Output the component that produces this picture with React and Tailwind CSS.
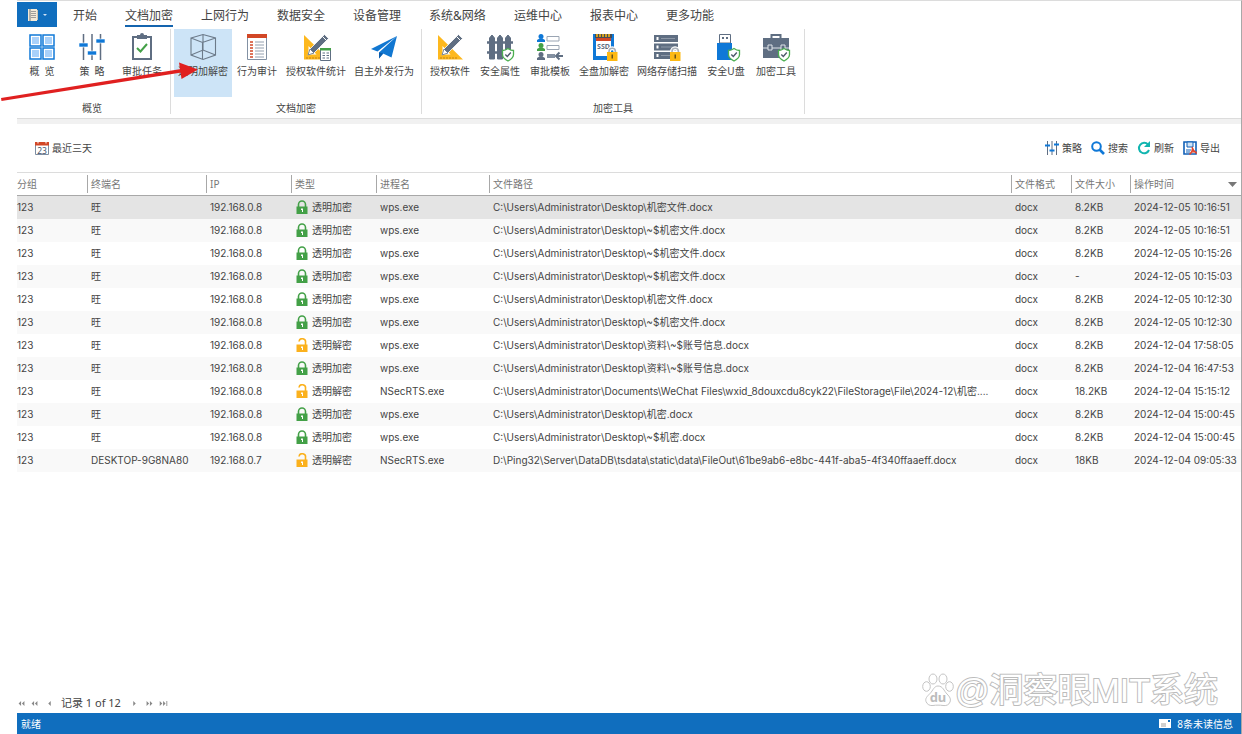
import React, { useState } from 'react';
import clsx from 'clsx';

const tabs = ['开始', '文档加密', '上网行为', '数据安全', '设备管理', '系统&网络', '运维中心', '报表中心', '更多功能'];

const desktop = 'C:\\Users\\Administrator\\Desktop\\';

const records = [
  ['旺', '192.168.0.8', true, 'wps.exe', desktop + '机密文件.docx', '8.2KB', '2024-12-05 10:16:51'],
  ['旺', '192.168.0.8', true, 'wps.exe', desktop + '~$机密文件.docx', '8.2KB', '2024-12-05 10:16:51'],
  ['旺', '192.168.0.8', true, 'wps.exe', desktop + '~$机密文件.docx', '8.2KB', '2024-12-05 10:15:26'],
  ['旺', '192.168.0.8', true, 'wps.exe', desktop + '~$机密文件.docx', '-', '2024-12-05 10:15:03'],
  ['旺', '192.168.0.8', true, 'wps.exe', desktop + '机密文件.docx', '8.2KB', '2024-12-05 10:12:30'],
  ['旺', '192.168.0.8', true, 'wps.exe', desktop + '~$机密文件.docx', '8.2KB', '2024-12-05 10:12:30'],
  ['旺', '192.168.0.8', false, 'wps.exe', desktop + '资料\\~$账号信息.docx', '8.2KB', '2024-12-04 17:58:05'],
  ['旺', '192.168.0.8', true, 'wps.exe', desktop + '资料\\~$账号信息.docx', '8.2KB', '2024-12-04 16:47:53'],
  ['旺', '192.168.0.8', false, 'NSecRTS.exe', 'C:\\Users\\Administrator\\Documents\\WeChat Files\\wxid_8douxcdu8cyk22\\FileStorage\\File\\2024-12\\机密....', '18.2KB', '2024-12-04 15:15:12'],
  ['旺', '192.168.0.8', true, 'wps.exe', desktop + '机密.docx', '8.2KB', '2024-12-04 15:00:45'],
  ['旺', '192.168.0.8', true, 'wps.exe', desktop + '~$机密.docx', '8.2KB', '2024-12-04 15:00:45'],
  ['DESKTOP-9G8NA80', '192.168.0.7', false, 'NSecRTS.exe', 'D:\\Ping32\\Server\\DataDB\\tsdata\\static\\data\\FileOut\\61be9ab6-e8bc-441f-aba5-4f340ffaaeff.docx', '18KB', '2024-12-04 09:05:33'],
];

const Icon = ({ children }) => (
  <svg className="h-[26px] w-[26px] overflow-visible" viewBox="0 0 26 26" fill="none" aria-hidden="true">
    {children}
  </svg>
);

/* Small marks that sit in the lower right corner of a ribbon icon */
const ShieldMark = () => (
  <g>
    <path d="M21 14.5c2 1.5 3.5 2 5.5 2v4c0 3-2.5 5-5.5 6.5c-3-1.5-5.5-3.5-5.5-6.5v-4c2 0 3.5-.5 5.5-2z" fill="#fff" stroke="#4caf50" strokeWidth="1.3" />
    <path d="M18.300 20.500l2 2 3.5-4" stroke="#4d5a6b" strokeWidth="1.4" />
  </g>
);

const LockMark = () => (
  <g>
    <path d="M18 20v-2.500a3.200 3.200 0 016.400 0V20" stroke="#fff" strokeWidth="4" />
    <path d="M18 20v-2.500a3.200 3.200 0 016.400 0V20" stroke="#a9b0b8" strokeWidth="1.6" />
    <path d="M16 18h10.500v9H16z" fill="#fdb913" />
    <path d="M20.500 20.500h1.500v4h-1.500z" fill="#69531a" />
  </g>
);

const PencilRuler = () => (
  <g>
    <path fillRule="evenodd" d="M1 1v24.500h25zM5.500 12l8 8.500h-8z" fill="#fdb81e" />
    <path d="M4 25v-2m3 2v-2m3 2v-2m3 2v-2m3 2v-2m3 2v-2" stroke="#b9780d" strokeWidth=".8" />
    <path d="M5 21l2-6L21.500.5l4 4L11 19z" fill="#5f6e82" stroke="#fff" strokeWidth=".8" />
    <path d="M5 21l2-6 4 4z" fill="#fff" stroke="#5f6e82" strokeWidth=".8" />
    <path d="M19.500 2.500l4 4" stroke="#fff" />
  </g>
);

const OverviewIcon = () => (
  <Icon>
    {[[1, 1], [14, 1], [1, 14], [14, 14]].map(([x, y]) => (
      <g key={`${x}-${y}`}>
        <rect x={x} y={y} width="11" height="11" fill="#fff" stroke="#1079d8" strokeWidth="1.5" />
        <rect x={x + 2} y={y + 2} width="7" height="7" fill="#a9d1fa" />
      </g>
    ))}
  </Icon>
);

const PolicyIcon = () => (
  <Icon>
    <path d="M4.500 0v26M13 0v26M21.500 0v26" stroke="#5f6e82" strokeWidth="1.5" />
    <path d="M0 9h9v4H0zM8.500 17h9v4h-9zM17 5h9v4h-9z" fill="#0f78d7" stroke="#fff" strokeWidth=".6" />
  </Icon>
);

const TaskIcon = () => (
  <Icon>
    <path d="M4 3h18v22H4z" stroke="#5f6e82" strokeWidth="2" />
    <path d="M8 1h3a2 2 0 014 0h3v4H8z" fill="#5f6e82" />
    <path d="M8 14l3.500 3.500L18 10" stroke="#43a047" strokeWidth="2" />
  </Icon>
);

const CubeIcon = () => (
  <Icon>
    <path d="M1 4l12-3.500L25.500 4v17L13 25.500 1 21zM1 4l11.500 4.500L25.500 4M12.500 8.500v17M1 21l12-5 12.500 5M13 .5V16" stroke="#6c7a89" strokeWidth="1.1" />
  </Icon>
);

const AuditIcon = () => (
  <Icon>
    <path d="M3.500 1h19v24.500h-19z" fill="#fff" stroke="#8291a3" />
    <path d="M3 0h20v4H3z" fill="#d24726" />
    <path d="M6 8h3M6 11h3M6 14h3M6 17h3M6 20h3M6 23h3" stroke="#d24726" strokeWidth="1.5" />
    <path d="M11 8h9M11 11h9M11 14h9M11 17h9M11 20h9M11 23h9" stroke="#94a0af" />
  </Icon>
);

const SoftwareStatsIcon = () => (
  <Icon>
    <PencilRuler />
    <path d="M17.500 15h10v11.500h-10z" fill="#fff" stroke="#5f6e82" />
    <path d="M17 14h11v2.500H17z" fill="#43a047" />
    <path d="M19.500 19h2.500m1.500 0h2.500m-6.500 2.500h2.500m1.500 0h2.500m-6.500 2.500h2.500m1.500 0h2.500" stroke="#5f6e82" />
  </Icon>
);

const SendIcon = () => (
  <Icon>
    <path d="M26 2L0 15l6.500 2.500zM26 2L8 18.500v6l3.500-4zM26 2L12 19.500l8.500 4z" fill="#1177d1" />
    <path d="M8 18.500v6l4-5z" fill="#0b5cab" />
  </Icon>
);

const SoftwareIcon = () => (
  <Icon>
    <PencilRuler />
  </Icon>
);

const FenceIcon = () => (
  <Icon>
    <path d="M0 8.500h26M0 18.500h26" stroke="#5f6e82" strokeWidth="2.5" />
    <path d="M2.500 25V4L5 1l2.500 3v21zM10.500 25V4L13 1l2.500 3v21zM18.500 25V4L21 1l2.500 3v21z" fill="#5f6e82" stroke="#5f6e82" />
    <ShieldMark />
  </Icon>
);

const TemplateIcon = () => (
  <Icon>
    {[[0, '#0f78d7'], [9, '#43a047'], [18, '#5f6e82']].map(([y, fill]) => (
      <g key={fill}>
        <circle cx="4" cy={y + 2.5} r="2.5" fill={fill} />
        <path d={`M0 ${y + 8}v-2l2.500-1.500h3L8 ${y + 6}v2z`} fill={fill} />
      </g>
    ))}
    <path d="M10 2.500h12v4.500H10zM10 11.500h12v4H10z" fill="#fff" stroke="#9aa5b3" />
    <path d="M10 20h8v4h-8z" fill="#8390a1" />
    <path d="M26 22h-6M22.500 18.500L19 22l3.500 3.500" stroke="#5f6e82" strokeWidth="2" />
  </Icon>
);

const DiskIcon = () => (
  <Icon>
    <path d="M2 0h21v26H2z" fill="#0f78d7" />
    <path d="M5 5h15v17H5z" fill="#fff" />
    <path d="M4 0h17v4H4z" fill="#444d57" />
    <path d="M6 0v3m3-3v3m3-3v3m3-3v3m3-3v3" stroke="#fdb913" strokeWidth="1.5" />
    <path d="M5 4h15v3H5z" fill="#d24726" />
    <text x="12.500" y="15" textAnchor="middle" fontSize="7" fontWeight="bold" fill="#5f6e82">SSD</text>
    <LockMark />
  </Icon>
);

const StorageIcon = () => (
  <Icon>
    <path d="M0 1h24v7H0zM0 9.500h24v7H0zM0 18h24v7H0z" fill="#5f6e82" />
    <path d="M3.500 3v3M3.500 11.500v3M3.500 20v3" stroke="#fff" strokeWidth="2" />
    <path d="M7 4.500h14M7 13h14M7 21.500h9" stroke="#8d98a7" />
    <LockMark />
  </Icon>
);

const UsbIcon = () => (
  <Icon>
    <path d="M6.500.5h11V9h-11z" fill="#fff" stroke="#5f6e82" />
    <path d="M9 3h2v2H9zM13 3h2v2h-2z" fill="#5f6e82" />
    <path d="M4 9h15v17H4z" fill="#0f78d7" />
    <ShieldMark />
  </Icon>
);

const ToolboxIcon = () => (
  <Icon>
    <path d="M8.500 4V1h9v3" stroke="#5f6e82" strokeWidth="2" />
    <path d="M0 4h26v20H0z" fill="#5f6e82" />
    <path d="M0 14h26" stroke="#dfe3e8" />
    <path d="M5 11h4v5H5zM18 11h4v5h-4z" fill="#5f6e82" stroke="#dfe3e8" />
    <ShieldMark />
  </Icon>
);

const groups = [
  {
    name: '概览',
    items: [['概 \u00a0览', OverviewIcon], ['策 \u00a0略', PolicyIcon], ['审批任务', TaskIcon]],
  },
  {
    name: '文档加密',
    items: [['透明加解密', CubeIcon], ['行为审计', AuditIcon], ['授权软件统计', SoftwareStatsIcon], ['自主外发行为', SendIcon]],
  },
  {
    name: '加密工具',
    items: [
      ['授权软件', SoftwareIcon],
      ['安全属性', FenceIcon],
      ['审批模板', TemplateIcon],
      ['全盘加解密', DiskIcon],
      ['网络存储扫描', StorageIcon],
      ['安全U盘', UsbIcon],
      ['加密工具', ToolboxIcon],
    ],
  },
];

function TabBar({ active, onSelect }) {
  return (
    <nav className="flex h-[25px] items-stretch">
      <button className="mr-4 flex w-10 items-center justify-center gap-1 bg-[#106ebe]" aria-label="文件">
        <svg className="h-3 w-3" viewBox="0 0 12 12" aria-hidden="true">
          <path d="M1 0h9v12H1z" fill="#f3ead8" />
          <path d="M3 0v12" stroke="#777" />
          <path d="M4 2.500h5M4 4.500h5M4 6.500h5M4 8.500h5" stroke="#8a8a8a" strokeWidth=".8" />
          <path d="M10.500 1v10" stroke="#cfc4ae" />
        </svg>
        <svg className="h-1 w-1" viewBox="0 0 4 4" aria-hidden="true">
          <path d="M0 1h4L2 3z" fill="#cfe2f5" />
        </svg>
      </button>
      <div className="flex gap-7">
        {tabs.map((tab) => (
          <button
            key={tab}
            onClick={() => onSelect(tab)}
            className={clsx('border-b-2 pt-1 text-[12px] leading-4 text-[#444]', tab === active ? 'border-[#1464ae]' : 'border-transparent')}
          >
            {tab}
          </button>
        ))}
      </div>
    </nav>
  );
}

function Ribbon() {
  return (
    <div className="flex h-[91px] pt-0.5">
      {groups.map((group) => (
        <section key={group.name} className="mb-1 flex flex-col border-r border-[#dcdcdc] px-[3px] first:pl-0">
          <div className="flex">
            {group.items.map(([label, Glyph]) => (
              <button
                key={label}
                className={clsx(
                  'flex h-[68px] min-w-[50px] flex-col items-center gap-[3px] px-1 pt-[5px] text-[10px] leading-4 whitespace-nowrap',
                  label === '透明加解密' && 'bg-[#cde4f7]'
                )}
              >
                <Glyph />
                {label}
              </button>
            ))}
          </div>
          <h2 className="pt-[3px] text-center text-[10px] leading-4">{group.name}</h2>
        </section>
      ))}
    </div>
  );
}

function Toolbar() {
  return (
    <div className="flex h-12 items-center justify-between pr-[21px] pl-[18px] text-[10px] leading-4">
      <button className="flex items-center gap-[3px]">
        <svg className="h-3.5 w-3.5" viewBox="0 0 14 14" fill="none" aria-hidden="true">
          <path d="M.5 2.500h13v11H.5z" fill="#fff" stroke="#7d8da1" />
          <path d="M0 1h14v3.500H0z" fill="#d24726" />
          <path d="M3 0v2.500M11 0v2.500" stroke="#fff" />
          <text x="7" y="12.500" textAnchor="middle" fontSize="8.5" fill="#44546a">23</text>
        </svg>
        最近三天
      </button>
      <div className="flex gap-[9px]">
        <button className="flex items-center gap-[3px]">
          <svg className="h-3.5 w-3.5" viewBox="0 0 14 14" fill="none" aria-hidden="true">
            <path d="M2.500 0v14M7 0v14M11.500 0v14" stroke="#5f6e82" />
            <path d="M0 4.500h5M4.500 9.500h5M9 3.500h5" stroke="#0f78d7" strokeWidth="2" />
          </svg>
          策略
        </button>
        <button className="flex items-center gap-[3px]">
          <svg className="h-3.5 w-3.5" viewBox="0 0 14 14" fill="none" aria-hidden="true">
            <circle cx="5.5" cy="5.5" r="4.3" stroke="#0f78d7" strokeWidth="2" />
            <path d="M8.500 8.500L13 13" stroke="#0f78d7" strokeWidth="2.6" />
          </svg>
          搜索
        </button>
        <button className="flex items-center gap-[3px]">
          <svg className="h-3.5 w-3.5" viewBox="0 0 14 14" fill="none" aria-hidden="true">
            <path d="M11 3.500A5.200 5.200 0 1012 9" stroke="#11b5b0" strokeWidth="2" />
            <path d="M13 0v6H7z" fill="#11b5b0" />
          </svg>
          刷新
        </button>
        <button className="flex items-center gap-[3px]">
          <svg className="h-3.5 w-3.5" viewBox="0 0 14 14" fill="none" aria-hidden="true">
            <path d="M1 1h12v12H1z" fill="#fff" stroke="#1160b7" strokeWidth="1.6" />
            <path d="M4 1h6v5H4z" fill="#cfe2f5" stroke="#1160b7" />
            <path d="M3 9h5M3 11h4" stroke="#1160b7" />
            <path d="M9 6c1 3 2 5 5 6.500M9.500 7c0 3-1 5-3 6.500M8 11.500c2-1 4-1 5.500-.5" stroke="#e0452c" strokeWidth="1.3" />
          </svg>
          导出
        </button>
      </div>
    </div>
  );
}

function Padlock({ locked }) {
  const color = locked ? '#43a047' : '#fbb11d';
  return (
    <svg className="h-3.5 w-3 shrink-0" viewBox="0 0 12 14" fill="none" aria-hidden="true">
      <path d={locked ? 'M2.500 7V4.500a3.500 3.500 0 017 0V7' : 'M3 3.500a3.200 3.200 0 016.500 1V7'} stroke={color} strokeWidth="1.6" />
      <path d="M.5 6.500h11V14H.5z" fill={color} />
      <path d="M5 8.500h2V12H6V10H5z" fill="#fff" />
    </svg>
  );
}

const HeadCell = ({ children }) => (
  <th scope="col" className="group py-0.5 pr-0 font-normal">
    <div className="flex h-[18px] items-center justify-between border-l border-[#a8a8a8] pl-[3px] group-first:border-l-0 group-first:pl-0">
      {children}
    </div>
  </th>
);

function RecordTable() {
  return (
    <table className="w-full table-fixed text-left text-[10px] leading-4">
      <colgroup>
        <col className="w-[70px]" />
        <col className="w-[119px]" />
        <col className="w-[85px]" />
        <col className="w-[85px]" />
        <col className="w-[113px]" />
        <col />
        <col className="w-[60px]" />
        <col className="w-[59px]" />
        <col className="w-[111px]" />
      </colgroup>
      <thead>
        <tr className="border-t border-b border-t-[#dcdcdc] border-b-[#a8a8a8] text-[#777]">
          <HeadCell>分组</HeadCell>
          <HeadCell>终端名</HeadCell>
          <HeadCell>IP</HeadCell>
          <HeadCell>类型</HeadCell>
          <HeadCell>进程名</HeadCell>
          <HeadCell>文件路径</HeadCell>
          <HeadCell>文件格式</HeadCell>
          <HeadCell>文件大小</HeadCell>
          <HeadCell>
            操作时间
            <svg className="mr-1 h-[5px] w-[9px]" viewBox="0 0 9 5" aria-hidden="true">
              <path d="M0 0h9L4.500 5z" fill="#777" />
            </svg>
          </HeadCell>
        </tr>
      </thead>
      <tbody className="font-[Inter,'Noto_Sans_CJK_SC',sans-serif]">
        {records.map(([host, ip, locked, process, path, size, time], i) => (
          <tr key={i} className={clsx('h-[23px] whitespace-nowrap', i === 0 ? 'bg-[#e4e4e4]' : i % 2 === 1 && 'bg-[#f9f9f9]')}>
            <td>123</td>
            <td className="pl-1">{host}</td>
            <td className="pl-1">{ip}</td>
            <td className="pl-1">
              <div className="flex items-center gap-1 pl-px">
                <Padlock locked={locked} />
                {locked ? '透明加密' : '透明解密'}
              </div>
            </td>
            <td className="pl-1">{process}</td>
            <td className="truncate pl-1">{path}</td>
            <td className="pl-1">docx</td>
            <td className="pl-1">{size}</td>
            <td className="pl-1">{time}</td>
          </tr>
        ))}
      </tbody>
    </table>
  );
}

const PagerButton = ({ label, d, width }) => (
  <button aria-label={label}>
    <svg className="h-[5px]" width={width} height="5" viewBox={`0 0 ${width} 6`} fill="#888" aria-hidden="true">
      <path d={d} />
    </svg>
  </button>
);

function Pager() {
  return (
    <div className="flex h-5 items-center pl-px text-[11px] leading-4">
      <div className="flex items-center gap-1.5">
        <PagerButton label="第一页" width={7} d="M3 0v6L0 3zM7 0v6L4 3z" />
        <PagerButton label="上一页" width={7} d="M3 0v6L0 3zM7 0v6L4 3z" />
        <span className="flex pl-1"><PagerButton label="上一条" width={3} d="M3 0v6L0 3z" /></span>
      </div>
      <span className="pr-3 pl-2.5">记录 1 of 12</span>
      <div className="flex items-center gap-1.5">
        <span className="flex pr-1"><PagerButton label="下一条" width={3} d="M0 0v6l3-3z" /></span>
        <PagerButton label="下一页" width={7} d="M0 0v6l3-3zM4 0v6l3-3z" />
        <PagerButton label="最后一页" width={9} d="M0 0v6l3-3zM4 0v6l3-3zM8 0h1v6H8z" />
      </div>
    </div>
  );
}

function Watermark() {
  return (
    <div className="pointer-events-none absolute right-6 bottom-[26px] flex items-center gap-px">
      <svg className="h-[34px] w-[32px]" viewBox="0 0 32 34" fill="#fff" stroke="#c4c4c4" aria-hidden="true">
        <ellipse cx="11" cy="6" rx="4" ry="5" />
        <ellipse cx="21" cy="6" rx="4" ry="5" />
        <ellipse cx="4.5" cy="13.5" rx="3.8" ry="4.8" />
        <ellipse cx="27.5" cy="13.5" rx="3.8" ry="4.8" />
        <path d="M16 13c5 0 6 5 9 8s4 5 3 8-4 4-7 3.500-7-.5-10 0-6-1-7-4 1-5 4-8 4-7.500 8-7.500z" />
        <text x="16" y="29" textAnchor="middle" fontSize="13" fontWeight="bold" stroke="none" fill="#bcbcbc">du</text>
      </svg>
      <span className="font-['Liberation_Sans','Noto_Sans_CJK_SC',sans-serif] text-[34px] leading-9 text-white [-webkit-text-stroke:2px_#bcbcbc] [paint-order:stroke]">@洞察眼MIT系统</span>
    </div>
  );
}

function App() {
  const [activeTab, setActiveTab] = useState('文档加密');

  return (
    <div className="relative flex min-h-screen flex-col bg-white pl-[17px] font-['Noto_Sans','Noto_Sans_CJK_SC',sans-serif] text-[#444]">
      <div className="flex flex-1 flex-col border-t border-r border-t-[#dcdcdc] border-r-[#a8a8a8] pt-px">
        <TabBar active={activeTab} onSelect={setActiveTab} />
        <Ribbon />
        <div className="h-[6px] border-t border-[#dcdcdc] bg-[#f1f1f1]" />
        <Toolbar />
        <RecordTable />
        <div className="flex-1" />
        <Pager />
        <footer className="flex h-[21px] items-center justify-between bg-[#106ebe] pr-2 pl-1 text-[10px] leading-4 text-white">
          <span>就绪</span>
          <span className="flex items-center gap-1.5">
            <svg className="h-[9px] w-3" viewBox="0 0 12 9" aria-hidden="true">
              <path d="M0 0h12v9H0z" fill="#fff" />
              <path d="M2 5h5M2 7h5" stroke="#888" strokeWidth=".8" />
              <path d="M9 1h2v2H9z" fill="#106ebe" />
            </svg>
            8条未读信息
          </span>
        </footer>
      </div>

      <Watermark />

      {/* Pointer to the highlighted ribbon entry */}
      <svg className="pointer-events-none absolute top-15 left-0 h-11 w-[200px]" viewBox="0 0 200 44" aria-hidden="true">
        <path d="M1 38L181 9l.5 3.500L1.500 41z" fill="#e02020" />
        <path d="M179 2.500L198 9.500 181.500 19z" fill="#e02020" />
      </svg>
    </div>
  );
}

export default App;
